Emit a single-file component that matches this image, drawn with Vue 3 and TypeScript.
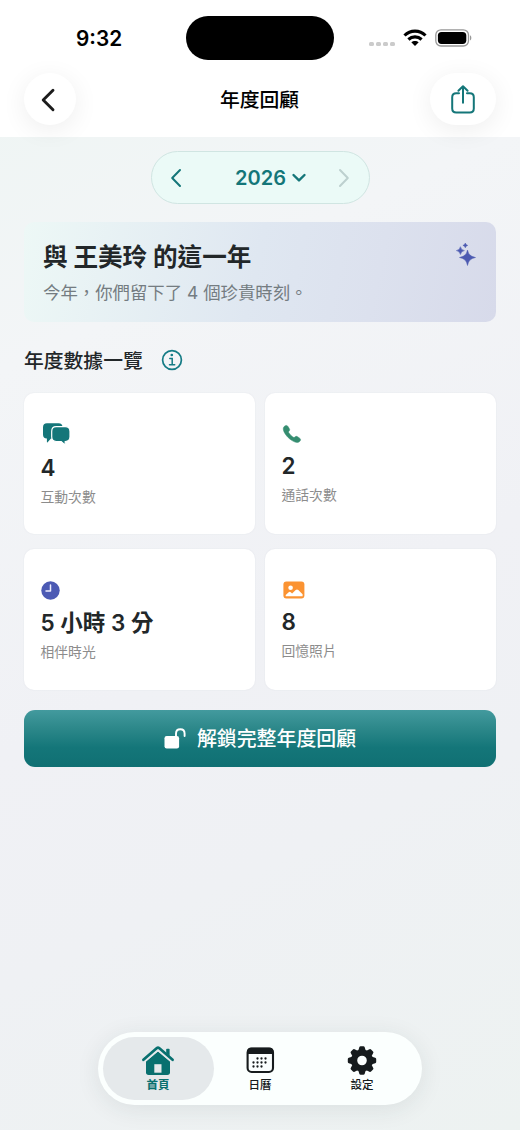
<script setup lang="ts">
import { ref } from 'vue'

type IconName = 'chat' | 'phone' | 'clock' | 'photo'
interface Stat {
  icon: IconName
  value: string
  label: string
}

const year = ref<number>(2026)
const activeTab = ref<string>('home')
const stats: Stat[] = [
  { icon: 'chat', value: '4', label: '互動次數' },
  { icon: 'phone', value: '2', label: '通話次數' },
  { icon: 'clock', value: '5 小時 3 分', label: '相伴時光' },
  { icon: 'photo', value: '8', label: '回憶照片' },
]
const tabs = [
  { id: 'home', label: '首頁' },
  { id: 'calendar', label: '日曆' },
  { id: 'settings', label: '設定' },
]
const calendarDots: [number, number][] = [
  [11, 11], [15, 11], [19, 11],
  [7, 15], [11, 15], [15, 15], [19, 15],
  [7, 19], [11, 19], [15, 19],
]
const gearTeeth = [0, 45, 90, 135, 180, 225, 270, 315]
</script>

<template>
  <div class="screen">
    <header class="top">
      <div class="status">
        <span class="time">9:32</span>
        <span class="island"></span>
        <div class="indicators">
          <span class="dots"><i v-for="n in 4" :key="n"></i></span>
          <svg class="wifi" width="24" height="18" viewBox="0 0 24 18">
            <g fill="none" stroke="#000" stroke-width="3.1">
              <path d="M1.5 6.5C7.3.7 16.7.7 22.5 6.5" />
              <path d="M5.4 10.5c3.7-3.5 9.5-3.5 13.2 0" />
            </g>
            <path d="M8.3 13.3c2.1-1.9 5.3-1.9 7.4 0L12 17z" fill="#000" />
          </svg>
          <svg class="battery" width="38" height="18" viewBox="0 0 38 18">
            <rect x=".8" y=".8" width="32.7" height="16.2" rx="5.2" fill="#fff" stroke="#989898" stroke-width="1.3" />
            <rect x="2.9" y="2.9" width="28.4" height="12" rx="3.6" />
            <path d="M35 6.3c1.8.8 1.8 4.4 0 5.2z" fill="#999" />
          </svg>
        </div>
      </div>
      <nav class="nav">
        <button class="round back" aria-label="返回">
          <svg width="16" height="26" viewBox="0 0 16 26"><path d="M13 3.2 3.2 13 13 22.8" fill="none" stroke="#1c1c1c" stroke-width="2.9" stroke-linecap="round" stroke-linejoin="round" /></svg>
        </button>
        <h1>年度回顧</h1>
        <button class="round share" aria-label="分享">
          <svg width="26" height="32" viewBox="0 0 26 32" fill="none" stroke="#147679" stroke-width="2" stroke-linecap="round" stroke-linejoin="round">
            <path d="M9 10.2H6.2Q2.200 10.200 2.200 14.200v11.400q0 4 4 4h13.600q4 0 4-4V14.200q0-4-4-4H17" />
            <path d="M13 19.800V3.300M8.400 7.800 13 3.200l4.600 4.600" />
          </svg>
        </button>
      </nav>
    </header>

    <main>
      <div class="year">
        <button aria-label="上一年"><svg width="12" height="20" viewBox="0 0 12 20"><path d="M10 2 2.2 10 10 18" stroke="#147679" /></svg></button>
        <div class="year-value">
          <span>{{ year }}</span>
          <svg width="14" height="10" viewBox="0 0 14 10"><path class="thick" d="M1.500 2 7 7.400 12.500 2" stroke="#147679" /></svg>
        </div>
        <button aria-label="下一年"><svg width="12" height="20" viewBox="0 0 12 20"><path d="M2 2l7.800 8L2 18" stroke="#bdd0cf" /></svg></button>
      </div>

      <section class="banner">
        <div>
          <h2>與 王美玲 的這一年</h2>
          <p>今年，你們留下了 4 個珍貴時刻。</p>
        </div>
        <svg width="20" height="24" viewBox="0 0 20 24" fill="#4c5ab1" stroke="#4c5ab1" stroke-width=".5" stroke-linejoin="round">
          <path d="M11.500 8q.9 6.300 8 7.500-7.100 1.200-8 8-.9-6.800-8-8 7.100-1.200 8-7.500z" />
          <path d="M4.400 4.700q.7 3.300 4 3.900-3.300.6-4 3.900-.7-3.300-4-3.900 3.300-.6 4-3.900z" />
          <path d="M9.300 1q.4 2 2.400 2.400-2 .4-2.400 2.400-.4-2-2.400-2.400 2-.4 2.400-2.400z" />
        </svg>
      </section>

      <div class="section-title">
        <h3>年度數據一覽</h3>
        <svg width="22" height="22" viewBox="0 0 22 22" fill="none" stroke="#147b85">
          <circle cx="11" cy="11" r="9.400" stroke-width="1.700" />
          <circle cx="10.800" cy="6" r="1.350" fill="#147b85" stroke="none" />
          <path d="M8.800 9.400h2.400v6.300M8.500 15.700h5.200" stroke-width="1.500" stroke-linecap="round" />
        </svg>
      </div>

      <section class="grid">
        <article v-for="stat in stats" :key="stat.icon" class="card" :class="stat.icon">
          <div class="icon">
            <svg v-if="stat.icon === 'chat'" width="28" height="22" viewBox="0 0 28 22">
              <path d="M5 .3h11.500q4 0 4 4v7.200q0 4-4 4H9l-3.400 3.700q-.7.600-.7-.4v-3.300q-3.900 0-3.900-4V4.300q0-4 4-4z" fill="#147679" />
              <path d="M14.200 3.600h9q4.800 0 4.800 4.800v5.400q0 4.500-4.500 4.700h-.3v2.100q0 1.600-1.300.4l-2.700-2.500h-5q-4.500 0-4.500-4.700V8.400q0-4.800 4.500-4.800z" fill="#147679" stroke="#fff" stroke-width="1.200" />
            </svg>
            <svg v-else-if="stat.icon === 'phone'" width="18" height="18" viewBox="0 0 18 18" fill="#358d70" stroke="#358d70" stroke-width=".5">
              <path d="M1.200 1.500C2.800-.1 4.200.2 5.200 1.800l1 1.600c.8 1.200.5 2-.3 2.800-.6.6-.5 1 .1 1.900 1.100 1.600 2.300 2.800 3.900 3.900.9.600 1.300.7 1.900.1.800-.8 1.600-1.100 2.800-.3l1.700 1.100c1.500 1 1.800 2.200.3 3.600-1.700 1.700-5 .8-8-1.200-2.600-1.700-4.500-3.600-6.200-6.100C.4 6.200-.5 3.200 1.200 1.500z" />
            </svg>
            <svg v-else-if="stat.icon === 'clock'" width="19" height="19" viewBox="0 0 19 19">
              <circle cx="9.500" cy="9.500" r="9.200" fill="#4c5ab4" />
              <path d="M9.500 4v6H5" fill="none" stroke="#eef" stroke-width="1.500" stroke-linecap="round" stroke-linejoin="round" />
            </svg>
            <svg v-else width="22" height="18" viewBox="0 0 22 18">
              <rect x=".4" y=".5" width="21" height="17" rx="3" fill="#fb9332" />
              <circle cx="7.600" cy="6.700" r="2.300" fill="#fff" />
              <path d="M2.700 15.300v-1.200l3-2.800q1-.9 2 0l1.400 1.200 3.600-3.400q1.300-1.100 2.600 0l4.300 4.200v2z" fill="#fff" />
            </svg>
          </div>
          <strong>{{ stat.value }}</strong>
          <span>{{ stat.label }}</span>
        </article>
      </section>

      <button class="unlock">
        <svg width="22" height="22" viewBox="0 0 22 22">
          <rect x=".5" y="8" width="14.600" height="12.500" rx="2.200" fill="#fff" />
          <path d="M12 8.500V5.500q0-4.300 4.300-4.300t4.300 4.300V8" fill="none" stroke="#fff" stroke-width="1.900" stroke-linecap="round" />
        </svg>
        <span>解鎖完整年度回顧</span>
      </button>
    </main>

    <footer class="tabs">
      <button v-for="tab in tabs" :key="tab.id" :class="{ active: tab.id === activeTab }" @click="activeTab = tab.id">
        <svg v-if="tab.id === 'home'" width="34" height="31" viewBox="0 0 34 31">
          <path d="M17 6.300l12 10v11q0 2.700-2.700 2.700H7.700Q5 30 5 27.300v-11z" fill="currentColor" />
          <path d="M2.200 15.400 17 3l14.800 12.400" fill="none" stroke="#e5e9eb" stroke-width="5.400" />
          <path d="M2.400 14.800 15.900 3.100q1.100-.9 2.200 0l13.500 11.700" fill="none" stroke="currentColor" stroke-width="2.700" stroke-linecap="round" />
          <path d="M25.200 8V4.500q0-.8.800-.8h1.800q.8 0 .8.800V11z" fill="currentColor" />
          <path d="M13.300 19.200h7.200v8.500h-7.200z" fill="#e5e9eb" />
        </svg>
        <svg v-else-if="tab.id === 'calendar'" width="28" height="31" viewBox="0 0 28 31">
          <g transform="translate(.5 2.500)">
            <rect x="1.100" y="1.100" width="25.400" height="23.400" rx="4" fill="#fbffff" stroke="currentColor" stroke-width="2.100" />
            <path d="M.5 6.500V4.500Q.5.300 4.500.300h18.600q4 0 4 4.200v2z" fill="currentColor" />
            <circle v-for="([x, y], i) in calendarDots" :key="i" :cx="x" :cy="y" r="1.150" fill="currentColor" />
          </g>
        </svg>
        <svg v-else width="30" height="31" viewBox="-15 -15.500 30 31">
          <path v-for="angle in gearTeeth" :key="angle" :transform="`rotate(${angle})`" d="M-3.700-10-2.700-13.200q.3-1 1.300-1h2.800q1 0 1.300 1L3.700-10z" fill="currentColor" />
          <circle r="7.900" fill="none" stroke="currentColor" stroke-width="6.200" />
        </svg>
        <span>{{ tab.label }}</span>
      </button>
    </footer>
  </div>
</template>

<style>
body {
  margin: 0;
}
</style>

<style scoped>
.screen {
  position: relative;
  box-sizing: border-box;
  width: 520px;
  height: 1130px;
  overflow: hidden;
  font-family: Inter, 'Noto Sans CJK TC', sans-serif;
  color: #222729;
  background: linear-gradient(155deg, #eff5f4 8%, #f3f5f7 27%, #f0f1f5 55%, #eff1f4 72%, #edf2f1 100%);
}
h1, h2, h3, p {
  margin: 0;
}
button {
  border: 0;
  padding: 0;
  background: none;
  font: inherit;
  color: inherit;
}
svg {
  display: block;
  flex: none;
  overflow: visible;
}
.top {
  height: 137px;
  background: #fff;
}
.status {
  display: grid;
  grid-template-columns: 186px 148px 186px;
  height: 73px;
}
.time {
  padding: 25px 0 0 76px;
  font-size: 20.800px;
  line-height: 27px;
  font-weight: 600;
  color: #000;
}
.island {
  height: 44px;
  margin-top: 16px;
  border-radius: 22px;
  background: #000;
}
.indicators {
  display: flex;
  align-items: flex-start;
  padding: 29px 0 0 35px;
}
.dots {
  display: flex;
  gap: 2.500px;
  padding-top: 12.500px;
}
.dots i {
  width: 4.600px;
  height: 4.600px;
  border-radius: 1.500px;
  background: #cbcbcb;
}
.wifi {
  margin-left: 8px;
}
.battery {
  margin-left: 8px;
}
.nav {
  display: flex;
  align-items: center;
  justify-content: space-between;
  height: 52px;
  padding: 0 24px;
}
.nav h1 {
  padding: 2px 0 0 13px;
  font-size: 19.800px;
  line-height: 28px;
  font-weight: 500;
  color: #000;
}
.round {
  display: flex;
  align-items: center;
  justify-content: center;
  height: 52px;
  border-radius: 26px;
  background: #fff;
  box-shadow: 0 5px 26px rgba(0, 0, 0, 0.070);
}
.back {
  width: 52px;
  padding-right: 4px;
}
.back svg {
  margin-top: 1px;
}
.share {
  width: 66px;
}
main {
  display: flex;
  flex-direction: column;
  padding: 14px 24px 0;
}
.year {
  display: flex;
  align-items: center;
  justify-content: space-between;
  align-self: center;
  box-sizing: border-box;
  width: 219px;
  height: 53px;
  padding: 0 18px;
  border: 1px solid #d0e5e2;
  border-radius: 27px;
  background: #ebfaf7;
}
.year path {
  fill: none;
  stroke-width: 2;
  stroke-linecap: round;
  stroke-linejoin: round;
}
.year path.thick {
  stroke-width: 2.400;
}
.year-value {
  display: flex;
  align-items: center;
  gap: 6px;
  padding-left: 21px;
  font-size: 20px;
  font-weight: 600;
  color: #147679;
}
.banner {
  display: flex;
  justify-content: space-between;
  box-sizing: border-box;
  height: 100px;
  margin-top: 18px;
  padding: 18px 20px 0 19px;
  border-radius: 10px;
  background: linear-gradient(102deg, #edf8f6 0%, #dfe7f1 49%, #dce1ee 74%, #d7daea 100%);
}
.banner h2 {
  font-size: 24.600px;
  line-height: 35px;
  font-weight: 700;
}
.banner p {
  margin-top: 4px;
  font-size: 17.400px;
  line-height: 27px;
  color: #747c81;
}
.banner svg {
  margin-top: 2px;
}
.section-title {
  display: flex;
  align-items: center;
  gap: 18px;
  height: 30px;
  margin-top: 23px;
}
.section-title h3 {
  padding-top: 2px;
  font-size: 19.800px;
  line-height: 30px;
  font-weight: 500;
}
.grid {
  display: grid;
  grid-template-columns: 1fr 1fr;
  gap: 15px 10px;
  margin-top: 18px;
}
.card {
  display: flex;
  flex-direction: column;
  box-sizing: border-box;
  height: 141px;
  padding: 27px 17px 0 16.500px;
  border-radius: 10px;
  background: #fff;
  box-shadow: 0 0 2px rgba(40, 60, 80, 0.070);
}
.icon {
  display: flex;
  align-items: center;
  height: 28px;
}
.chat .icon,
.phone .icon,
.photo .icon {
  padding-left: 1px;
}
.card strong {
  margin-top: 3px;
  font-size: 22.500px;
  line-height: 32px;
  font-weight: 600;
}
.chat strong {
  margin-top: 4px;
}
.phone strong,
.photo strong {
  margin-top: 2px;
}
.card span {
  margin-top: 2px;
  font-size: 13.800px;
  line-height: 22px;
  color: #8c8c8c;
}
.unlock {
  display: flex;
  align-items: center;
  justify-content: center;
  gap: 11px;
  height: 57px;
  margin-top: 20px;
  border-radius: 11px;
  background: linear-gradient(180deg, #439a9e 0%, #2e898b 30%, #147679 66%, #107073 100%);
  color: #fff;
  font-size: 19.900px;
  font-weight: 500;
}
.unlock span {
  padding-bottom: 2px;
}
.tabs {
  position: absolute;
  left: 98px;
  bottom: 25px;
  display: flex;
  box-sizing: border-box;
  width: 324px;
  height: 73px;
  padding: 5px;
  border-radius: 37px;
  background: #fbfffe;
  box-shadow: 0 4px 24px rgba(30, 50, 60, 0.090);
}
.tabs button {
  display: flex;
  flex-direction: column;
  align-items: center;
  box-sizing: border-box;
  width: 102px;
  padding-top: 8px;
  border-radius: 32px;
  font-size: 11.500px;
  line-height: 17px;
  font-weight: 500;
  color: #161b1d;
}
.tabs button.active {
  width: 111px;
  margin-right: -5px;
  padding-right: 1px;
  background: #e5e9eb;
  color: #08706f;
  font-weight: 700;
}
.tabs span {
  margin-top: 1px;
}
</style>
